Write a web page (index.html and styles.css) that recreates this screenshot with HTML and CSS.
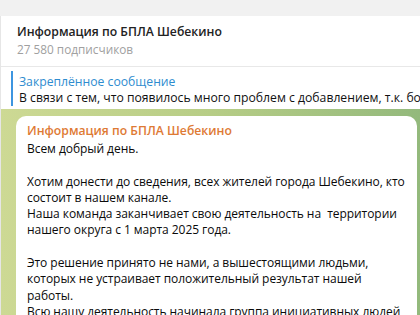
FILE: index.html
```html
<!DOCTYPE html>
<html>
<head>
    <title>Информация по БПЛА Шебекино</title>
    <link rel="stylesheet" href="styles.css">
</head>
<body>
    <div class="topbar"></div>
    <div class="channel">
        <div class="header">
            <div class="title">Информация по БПЛА Шебекино</div>
            <div class="subs">27 580 подписчиков</div>
        </div>
        <div class="pinned">
            <div class="pinned-inner">
                <div class="pinned-title">Закреплённое сообщение</div>
                <div class="pinned-text">В связи с тем, что появилось много проблем с добавлением, т.к. бот перестал работать</div>
            </div>
        </div>
        <div class="chat">
            <div class="bubble">
                <div class="author">Информация по БПЛА Шебекино</div>
                <div class="text">Всем добрый день.<br>
<br>
Хотим донести до сведения, всех жителей города Шебекино, кто состоит в нашем канале.<br>
Наша команда заканчивает свою деятельность на&nbsp; территории нашего округа с 1 марта 2025 года.<br>
<br>
Это решение принято не нами, а вышестоящими людьми, которых не устраивает положительный результат нашей работы.<br>
Всю нашу деятельность начинала группа инициативных людей</div>
            </div>
        </div>
    </div>
</body>
</html>
```

FILE: styles.css
```css
body {
    margin: 0;
    background-color: #f1f1f1;
    font-family: "Open Sans", "Noto Sans", sans-serif;
    overflow: hidden;
}
.topbar {
    height: 16px;
}
.channel {
    background-color: #fff;
    border-left: 1px solid #e6e6e6;
}
.header {
    padding: 7px 0 0 16px;
    height: 43px;
    border-bottom: 1px solid #e8e8e8;
}
.title {
    font-size: 12.2px;
    font-weight: 600;
    color: #222;
    line-height: 18px;
}
.subs {
    font-size: 11.8px;
    color: #a0a0a0;
    line-height: 17px;
}
.pinned {
    padding: 4px 0 4px 10px;
    height: 34px;
}
.pinned-inner {
    border-left: 2px solid #3d95e0;
    padding-left: 6px;
    white-space: nowrap;
    overflow: hidden;
}
.pinned-title {
    font-size: 12.2px;
    color: #2e8ccf;
    line-height: 16px;
    padding-top: 3px;
}
.pinned-text {
    font-size: 12.2px;
    color: #111;
    line-height: 16px;
}
.chat {
    background: linear-gradient(90deg, #cdd994 0%, #b7cd86 50%, #93b97c 100%);
    padding: 7px 3px 0 15px;
    height: 300px;
}
.bubble {
    background-color: #fff;
    border-radius: 10px;
    padding: 7px 11px 8px 11px;
}
.author {
    font-size: 12.2px;
    font-weight: 600;
    color: #de7a34;
    line-height: 16px;
    margin-bottom: 2px;
}
.text {
    font-size: 12px;
    color: #0a0a0a;
    line-height: 16.3px;
    letter-spacing: -0.05px;
}
```
